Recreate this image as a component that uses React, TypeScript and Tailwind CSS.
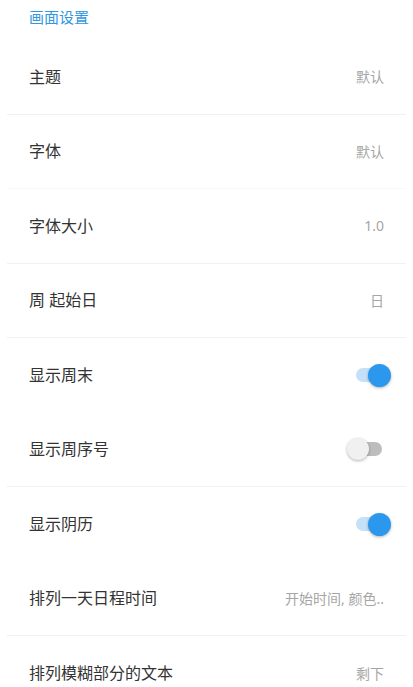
import React from 'react';

type Item = {
  label: string;
  value?: string;
  toggle?: boolean;
  divider?: 'normal' | 'faint' | 'none';
};

const items: Item[] = [
  { label: '主题', value: '默认', divider: 'normal' },
  { label: '字体', value: '默认', divider: 'faint' },
  { label: '字体大小', value: '1.0', divider: 'normal' },
  { label: '周 起始日', value: '日', divider: 'normal' },
  { label: '显示周末', toggle: true, divider: 'none' },
  { label: '显示周序号', toggle: false, divider: 'normal' },
  { label: '显示阴历', toggle: true, divider: 'none' },
  { label: '排列一天日程时间', value: '开始时间, 颜色..', divider: 'normal' },
  { label: '排列模糊部分的文本', value: '剩下', divider: 'none' },
];

function Toggle({ on }: { on: boolean }) {
  return (
    <div className="relative w-[36px] h-[24px] flex items-center">
      <div
        className={
          on
            ? 'absolute left-[1px] w-[29px] h-[14px] rounded-full bg-[#c4e1f9]'
            : 'absolute left-[5px] w-[22px] h-[14px] rounded-full bg-[#bdbdbd]'
        }
      />
      {on ? (
        <div className="absolute left-[13px] w-[23px] h-[23px] rounded-full bg-[#2b98ee] shadow-[0_1px_3px_rgba(0,0,0,0.3)]" />
      ) : (
        <div className="absolute left-[-8px] w-[22px] h-[22px] rounded-full bg-[#f0f0f0] shadow-[0_1px_3px_rgba(0,0,0,0.3)]" />
      )}
    </div>
  );
}

export default function App() {
  return (
    <div
      className="w-[413px] h-[687px] overflow-hidden bg-white"
      style={{ fontFamily: '"Noto Sans", "Noto Sans CJK SC", sans-serif' }}
    >
      <div className="h-[40px] pl-[29px] pt-[6px] text-[15px] leading-[22px] text-[#3197e0]">
        画面设置
      </div>
      <div className="mx-[7px]">
        {items.map((item, i) => (
          <div
            key={i}
            className={
              'h-[74.5px] flex items-center justify-between pl-[22px] ' +
              (item.toggle !== undefined ? 'pr-[15px] ' : 'pr-[22px] ') +
              (item.divider === 'normal'
                ? 'border-b border-[#f1f1f1]'
                : item.divider === 'faint'
                ? 'border-b border-[#f9f9f9]'
                : '')
            }
          >
            <span className="text-[16px] text-[#333333]">{item.label}</span>
            {item.toggle !== undefined ? (
              <Toggle on={item.toggle} />
            ) : (
              <span className="text-[14px] text-[#a6a6a6]">{item.value}</span>
            )}
          </div>
        ))}
      </div>
    </div>
  );
}
